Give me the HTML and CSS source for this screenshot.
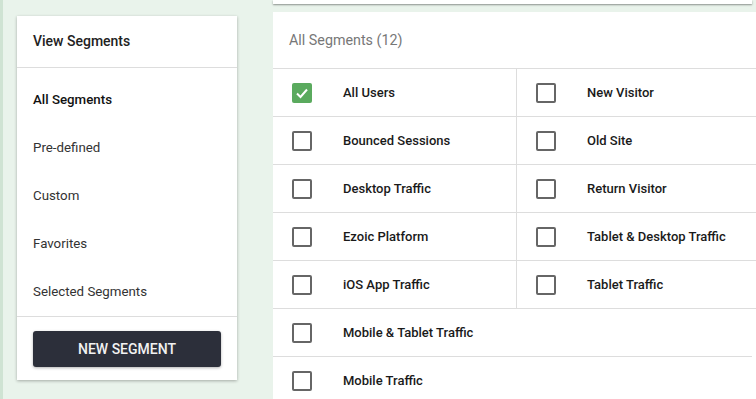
FILE: index.html
```html
<!DOCTYPE html>
<html lang="en">
<head>
  <meta charset="UTF-8" />
  <title>Segments</title>
  <link rel="stylesheet" href="styles.css">
</head>
<body>
  <div class="strip"></div>

  <div class="side">
    <div class="side-head">View Segments</div>
    <ul class="side-list">
      <li class="active">All Segments</li>
      <li>Pre-defined</li>
      <li>Custom</li>
      <li>Favorites</li>
      <li>Selected Segments</li>
    </ul>
    <div class="side-foot">
      <button class="btn">NEW SEGMENT</button>
    </div>
  </div>

  <div class="main">
    <div class="topbar"></div>
    <div class="card">
      <div class="card-head">All Segments (12)</div>
      <div class="grid">
        <div class="cell left"><span class="box checked"><svg viewBox="0 0 20 20" width="20" height="20"><polyline points="5,10.5 8.5,14 15,6.5" fill="none" stroke="#fff" stroke-width="2"/></svg></span>All Users</div>
        <div class="cell"><span class="box"></span>New Visitor</div>
        <div class="cell left"><span class="box"></span>Bounced Sessions</div>
        <div class="cell"><span class="box"></span>Old Site</div>
        <div class="cell left"><span class="box"></span>Desktop Traffic</div>
        <div class="cell"><span class="box"></span>Return Visitor</div>
        <div class="cell left"><span class="box"></span>Ezoic Platform</div>
        <div class="cell"><span class="box"></span>Tablet &amp; Desktop Traffic</div>
        <div class="cell left"><span class="box"></span>iOS App Traffic</div>
        <div class="cell"><span class="box"></span>Tablet Traffic</div>
        <div class="cell wide"><span class="box"></span>Mobile &amp; Tablet Traffic</div>
        <div class="cell wide"><span class="box"></span>Mobile Traffic</div>
      </div>
    </div>
  </div>
</body>
</html>
```

FILE: styles.css
```css
* {
  box-sizing: border-box;
  margin: 0; padding: 0;
}
body {
  display: flex;
  align-items: flex-start;
  height: 100vh;
  overflow: hidden;
  font-family: Roboto, "Liberation Sans", sans-serif;
  background: #e9f3eb;
  color: #222;
}
.strip {
  width: 3px;
  height: 100vh;
  background: #cfe3d3;
}
.side {
  width: 220px;
  margin: 16px 0 0 14px;
  background: #fff;
  box-shadow: 0 1px 3px rgba(0, 0, 0, 0.3);
}
.side-head {
  height: 52px;
  padding: 17px 16px 0;
  font-size: 14px;
  font-weight: 500;
  border-bottom: 1px solid #ddd;
}
.side-list {
  list-style: none;
  padding-top: 8px;
  border-bottom: 1px solid #ddd;
}
.side-list li {
  height: 48px;
  line-height: 48px;
  padding-left: 16px;
  font-size: 13.3px;
  color: #333;
}
.side-list li.active {
  font-weight: 500;
  color: #111;
}
.side-foot {
  padding: 14px 16px 13px;
}
.btn {
  display: block;
  width: 100%;
  height: 36px;
  border: none;
  border-radius: 3px;
  background: #2c2f3a;
  color: #f2f2f2;
  font-family: inherit;
  font-size: 14px;
  font-weight: 500;
  box-shadow: 0 1px 3px rgba(0, 0, 0, 0.3);
}
.main {
  flex: 1;
  margin-left: 36px;
  display: flex;
  flex-direction: column;
  gap: 8px;
}
.topbar {
  height: 4px;
  margin-right: 4px;
  background: #fff;
  box-shadow: 0 1px 2px rgba(0, 0, 0, 0.4);
}
.card {
  background: #fff;
}
.card-head {
  height: 57px;
  padding: 20px 16px 0;
  font-size: 14.3px;
  color: #777;
  border-bottom: 1px solid #ddd;
}
.grid {
  display: grid;
  grid-template-columns: 244px 1fr;
}
.cell {
  display: flex;
  align-items: center;
  height: 48px;
  padding-left: 19px;
  font-size: 13px;
  font-weight: 500;
  color: #1a1a1a;
  border-bottom: 1px solid #ddd;
}
.cell.left {
  border-right: 1px solid #ddd;
}
.cell.wide {
  grid-column: 1 / -1;
  margin-right: 4px;
}
.box {
  width: 20px;
  height: 20px;
  margin-right: 31px;
  border: 2px solid #666;
  border-radius: 2px;
  flex-shrink: 0;
}
.box.checked {
  border: none;
  background: #5aaa5e;
}
.box svg {
  display: block;
}
```
